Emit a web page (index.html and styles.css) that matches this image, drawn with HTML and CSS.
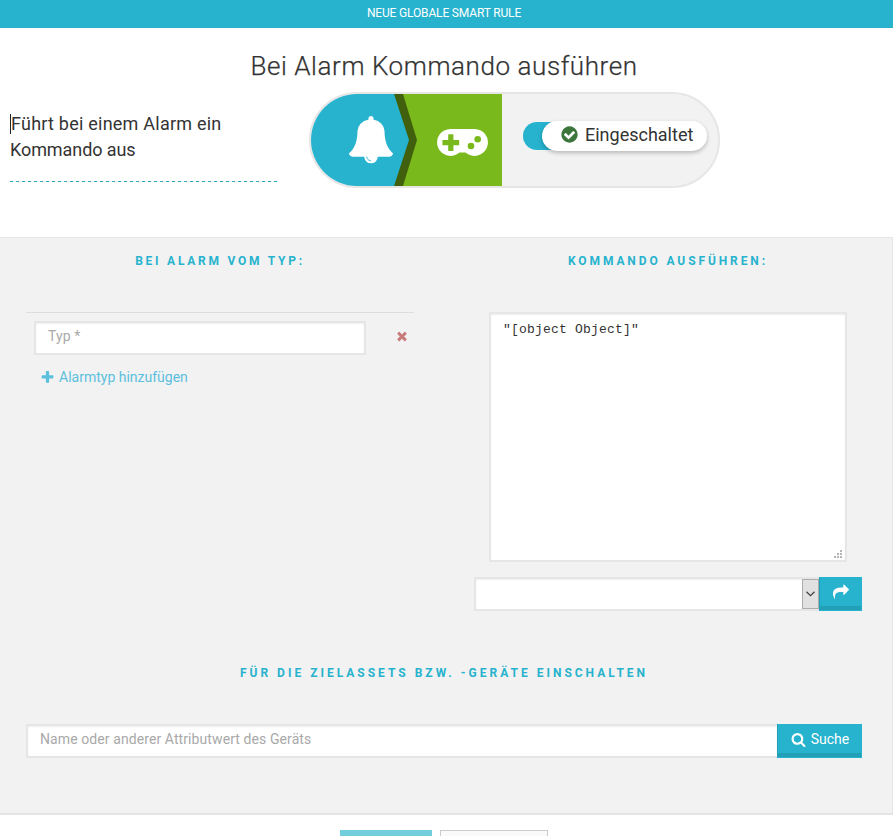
FILE: index.html
```html
<!DOCTYPE html>
<html lang="de">
<head>
<meta charset="utf-8">
<title>Neue globale Smart Rule</title>
<link rel="stylesheet" href="styles.css">
</head>
<body>
<header class="topbar"><span>NEUE GLOBALE SMART RULE</span></header>
<section class="intro">
  <h1><span>Bei Alarm Kommando ausführen</span></h1>
  <div class="summary">
    <div class="description"><span class="line first">Führt bei einem Alarm ein</span><br><span class="line second">Kommando aus</span></div>
    <div class="pill">
      <svg class="flow" width="191" height="92" viewBox="0 0 191 92">
        <path fill="#27b2ce" d="M0 0h84l15 46-15 46H0z"/>
        <path fill="#79b91b" d="M90 0h101v92H90l15-46z"/>
        <path fill="#40600e" d="M83 0h9l14 46-14 46h-9l15-46z"/>
        <svg x="36.3" y="22" width="47.4" height="47.4" viewBox="0 0 1792 1792"><path fill="#fff" d="M64 1408q0 52 38 90t90 38h448q0 106 75 181t181 75 181-75 75-181h448q52 0 90-38t38-90q-50-42-91-88t-85-119.500-74.500-158.500-50-206-19.500-260q0-152-117-282.500t-307-158.500q8-19 8-39 0-40-28-68t-68-28-68 28-28 68q0 20 8 39-190 28-307 158.500t-117 282.500q0 139-19.500 260t-50 206-74.500 158.500-85 119.500-91 88z"/><path fill="none" stroke="#27b2ce" stroke-width="34" d="M736 1536q0 66 47 113t113 47"/></svg>
        <g transform="translate(126 35)">
          <path fill="#fff" d="M13.500 0h24a13.500 13.500 0 1 1-9 23.600h-6A13.500 13.500 0 1 1 13.500 0z"/>
          <path fill="#79b91b" d="M11.800 5.300h4a.6.600 0 0 1 .6.600v5.200h5.200a.6.600 0 0 1 .6.600v4a.6.600 0 0 1-.6.600h-5.200v5.200a.6.600 0 0 1-.6.600h-4a.6.600 0 0 1-.6-.6v-5.200H6a.6.600 0 0 1-.6-.6v-4a.6.600 0 0 1 .6-.6h5.200V5.900a.6.600 0 0 1 .6-.6z"/>
          <circle cx="34" cy="17" r="3.300" fill="#79b91b"/><circle cx="40.700" cy="10.200" r="3.300" fill="#79b91b"/>
        </g>
      </svg>
      <div class="toggle">
        <div class="knob">
          <svg width="19" height="19" viewBox="0 0 1792 1792"><path fill="#3c763d" d="M1412 734q0-28-18-46l-91-90q-19-19-45-19t-45 19l-408 407-226-226q-19-19-45-19t-45 19l-91 90q-18 18-18 46 0 27 18 45l362 362q19 19 45 19 27 0 46-19l543-543q18-18 18-45zm252 162q0 209-103 385.500t-279.500 279.500-385.500 103-385.500-103-279.500-279.500-103-385.500 103-385.500 279.500-279.500 385.500-103 385.500 103 279.500 279.500 103 385.500z"/></svg>
          <span>Eingeschaltet</span>
        </div>
      </div>
    </div>
  </div>
</section>
<main class="panel">
  <div class="columns">
    <section>
      <h2 class="t-alarm"><span>BEI ALARM VOM TYP:</span></h2>
      <div class="type-list">
        <div class="type-row">
          <input class="field" type="text" placeholder="Typ *">
          <svg width="14" height="14" viewBox="0 0 1792 1792"><path fill="#c77c7b" d="M1490 1322q0 40-28 68l-136 136q-28 28-68 28t-68-28l-294-294-294 294q-28 28-68 28t-68-28l-136-136q-28-28-28-68t28-68l294-294-294-294q-28-28-28-68t28-68l136-136q28-28 68-28t68 28l294 294 294-294q28-28 68-28t68 28l136 136q28 28 28 68t-28 68l-294 294 294 294q28 28 28 68z"/></svg>
        </div>
        <a class="add"><svg width="15" height="15" viewBox="0 0 1792 1792"><path fill="#5bc0de" d="M1600 736v192q0 40-28 68t-68 28h-416v416q0 40-28 68t-68 28h-192q-40 0-68-28t-28-68v-416h-416q-40 0-68-28t-28-68v-192q0-40 28-68t68-28h416v-416q0-40 28-68t68-28h192q40 0 68 28t28 68v416h416q40 0 68 28t28 68z"/></svg><span>Alarmtyp hinzufügen</span></a>
      </div>
    </section>
    <section>
      <h2 class="t-command"><span>KOMMANDO AUSFÜHREN:</span></h2>
      <div class="editor">
        <textarea class="field">"[object Object]"</textarea>
        <svg class="grip" width="8" height="8" viewBox="0 0 8 8"><path fill="#b5b5b5" d="M6 0h2v2H6zM3 3h2v2H3zM6 3h2v2H6zM0 6h2v2H0zM3 6h2v2H3zM6 6h2v2H6z"/></svg>
      </div>
      <div class="group">
        <div class="field select"><span class="arrow"><svg width="9" height="6" viewBox="0 0 9 6"><path fill="none" stroke="#444" stroke-width="1.300" d="M.5.700l4 4 4-4"/></svg></span></div>
        <button class="btn share"><svg width="16" height="16" viewBox="0 0 1792 1792"><path fill="#fff" d="M1792 640q0 26-19 45l-512 512q-19 19-45 19t-45-19-19-45v-256h-224q-98 0-175.500 6t-154 21.500-133 42.500-105.500 69.500-80 101-48.500 138.500-17.500 181q0 55 5 123 0 6 2.500 23.500t2.500 26.500q0 15-8.500 25t-23.500 10q-16 0-28-17-7-9-13-22t-13.500-30-10.500-24q-127-285-127-451 0-199 53-333 162-403 875-403h224v-256q0-26 19-45t45-19 45 19l512 512q19 19 19 45z"/></svg></button>
      </div>
    </section>
  </div>
  <section class="targets">
    <h2><span>FÜR DIE ZIELASSETS BZW. -GERÄTE EINSCHALTEN</span></h2>
    <div class="group">
      <input class="field search" type="text" placeholder="Name oder anderer Attributwert des Geräts">
      <button class="btn find"><svg width="15" height="15" viewBox="0 0 1792 1792"><path fill="#fff" d="M1216 832q0-185-131.500-316.500t-316.500-131.500-316.500 131.500-131.500 316.500 131.500 316.500 316.500 131.500 316.500-131.500 131.500-316.500zm512 832q0 52-38 90t-90 38q-54 0-90-38l-343-342q-179 124-399 124-143 0-273.500-55.500t-225-150-150-225-55.500-273.500 55.500-273.500 150-225 225-150 273.500-55.500 273.500 55.500 225 150 150 225 55.500 273.500q0 220-124 399l343 343q37 37 37 90z"/></svg><span>Suche</span></button>
    </div>
  </section>
</main>
<footer class="actions"><div class="save"></div><div class="cancel"></div></footer>
</body>
</html>
```
FILE: styles.css
```css
* { box-sizing: border-box; }
html { height: 100%; }
body { margin: 0; height: 836px; overflow: hidden; background: #fff; color: #333; font-family: Roboto, "Liberation Sans", sans-serif; font-size: 14px; }
svg { display: block; flex: none; }
.topbar { height: 28px; line-height: 27px; background: #27b2ce; color: #fff; text-align: center; font-size: 12px; padding-right: 5px; letter-spacing: -.16px; }
.intro { height: 209px; }
h1 { margin: 0; padding: 20px 5px 0 0; height: 64px; line-height: 37px; text-align: center; font-size: 26px; font-weight: 300; -webkit-text-stroke: .25px #333; letter-spacing: .58px; white-space: nowrap; }
.summary { display: flex; align-items: flex-start; padding-left: 10px; }
.description { width: 269px; height: 71px; margin: 19px 30px 0 0; line-height: 26px; font-size: 18px; background: repeating-linear-gradient(90deg, #30aabb 0 3px, #e4f4f6 3px 6px) left bottom / 100% 1px no-repeat; white-space: nowrap; letter-spacing: .23px; }
.first { border-left: 1px solid #222; display: inline-block; height: 20px; line-height: 20px; }
.second { letter-spacing: -.08px; }
.pill { display: flex; width: 411px; height: 96px; border: 2px solid #e6e6e6; border-radius: 48px; background: #f2f2f2; overflow: hidden; }
.toggle { width: 170px; height: 28px; margin: 28px 0 0 21px; padding-left: 19px; border-radius: 14px; background: linear-gradient(90deg, #27b2ce 60px, transparent 60px); }
.knob { display: flex; align-items: center; width: 165px; height: 30px; margin-top: -1px; padding-left: 18px; gap: 6px; border-radius: 15px; background: #fff; box-shadow: 0 2px 4px rgba(0,0,0,.24); font-size: 18px; line-height: 28px; }
.knob span { margin-top: -3px; }
.knob svg { margin-top: -3px; }
.panel { height: 578px; background: #f2f2f2; border: solid #e4e4e4; border-width: 1px 1px 2px 0; padding-left: 26px; }
.columns { display: grid; grid-template-columns: 388px 388px; gap: 60px; height: 412px; }
h2 { margin: 0; height: 74px; padding-top: 14px; line-height: 18px; text-align: center; font-size: 12px; font-weight: 700; color: #27b2ce; letter-spacing: 3px; white-space: nowrap; }
h2.t-alarm { letter-spacing: 2.75px; }
h2.t-command { letter-spacing: 2.9px; }
.type-list { border-top: 1px solid #ddd; padding: 8px 0 0 8px; }
.type-row { display: flex; align-items: center; gap: 29px; }
.type-row svg { margin-top: -4px; }
.field { display: block; background: #fff; border: 2px solid #e6e6e6; border-radius: 0; outline: 0; margin: 0; height: 34px; padding: 0 12px 4px; font: 14px Roboto, sans-serif; letter-spacing: .09px; box-shadow: inset 0 1px 2px rgba(0,0,0,.07); color: #333; }
.field::placeholder { color: #a9a9a9; opacity: 1; }
.type-row .field { width: 332px; }
.add { display: flex; align-items: center; gap: 4px; height: 20px; margin: 12px 0 0 6px; color: #5bc0de; }
.editor { position: relative; width: 358px; margin: 0 0 15px 15px; }
textarea.field { width: 358px; height: 250px; padding: 7px 12px; resize: none; font: 13px/17px "Liberation Mono", monospace; letter-spacing: .2px; overflow: hidden; }
.grip { position: absolute; right: 5px; bottom: 4px; }
.group { display: flex; }
.select { width: 345px; display: flex; justify-content: flex-end; padding: 0; border-right: 0; }
.arrow { display: flex; align-items: center; justify-content: center; width: 17px; background: #e1e1e1; border: 1px solid #adadad; }
.btn { display: flex; align-items: center; justify-content: center; height: 34px; border: 1px solid #27b2ce; border-left-color: #22a0b8; border-radius: 0; background: #27b2ce; box-shadow: inset 0 -4px #22a0b8; color: #fff; padding: 0 0 4px; font: 14px Roboto, sans-serif; gap: 5px; }
.share { width: 43px; }
.targets { width: 836px; }
.search { width: 751px; border-right: 0; }
.find { width: 85px; padding-left: 1px; }
.actions { display: flex; gap: 8px; padding: 15px 0 0 340px; }
.save { width: 92px; height: 34px; background: #72cddd; }
.cancel { width: 108px; height: 34px; background: #fafafa; border: 1px solid #ccc; }
```
